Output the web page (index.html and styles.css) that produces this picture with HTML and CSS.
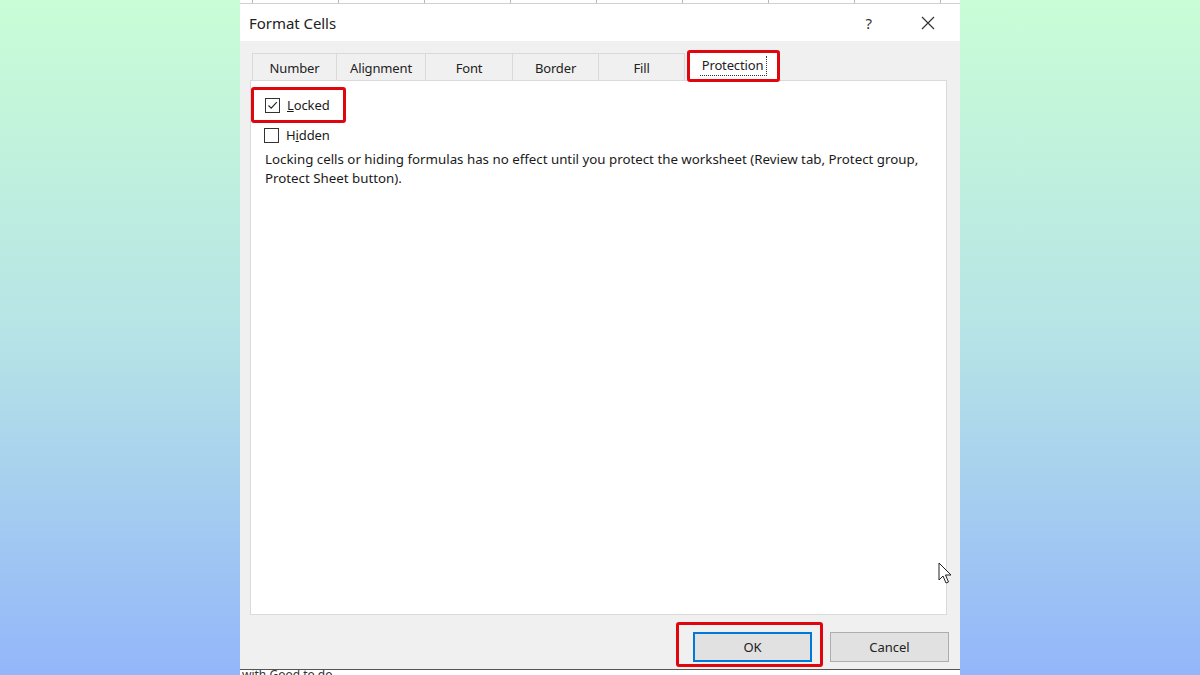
FILE: index.html
```html
<!DOCTYPE html>
<html>
<head>
<meta charset="utf-8">
<link rel="stylesheet" href="styles.css">
</head>
<body>
<div class="screen">
  <div class="sheet-top"></div>
  <div class="titlebar">
    <span class="title">Format Cells</span>
    <span class="help">?</span>
    <svg class="close" width="14" height="14" viewBox="0 0 14 14"><path d="M1 1 L13 13 M13 1 L1 13" stroke="#333" stroke-width="1.2" fill="none"/></svg>
  </div>
  <div class="dialog-body">
    <div class="tabs">
      <div class="tab t-number">Number</div>
      <div class="tab t-align">Alignment</div>
      <div class="tab t-font">Font</div>
      <div class="tab t-border">Border</div>
      <div class="tab t-fill">Fill</div>
      <div class="tab tab-active"><span class="focus">Protection</span></div>
    </div>
    <div class="panel">
      <div class="check-row locked-row">
        <span class="box"><svg width="13" height="13" viewBox="0 0 13 13"><path d="M2.5 6.5 L5.2 9.2 L10.8 3.2" stroke="#222" stroke-width="1.1" fill="none"/></svg></span>
        <span class="label"><u>L</u>ocked</span>
      </div>
      <div class="check-row">
        <span class="box"></span>
        <span class="label">H<u>i</u>dden</span>
      </div>
      <p class="desc">Locking cells or hiding formulas has no effect until you protect the worksheet (Review tab, Protect group, Protect Sheet button).</p>
    </div>
    <div class="buttons">
      <div class="ok-wrap"><button class="btn btn-ok">OK</button></div>
      <button class="btn btn-cancel">Cancel</button>
    </div>
  </div>
  <div class="sheet-bottom"><span>with Good to do</span></div>
  <svg class="cursor" width="14" height="24" viewBox="0 0 14 24"><path d="M1 1 L1 18 L5 14 L8 21 L10.5 20 L7.5 13 L13 13 Z" fill="#fff" stroke="#222" stroke-width="1" stroke-linejoin="round"/></svg>
</div>
</body>
</html>
```
FILE: styles.css
```css
html, body {
  margin: 0;
  padding: 0;
}
body {
  width: 1200px;
  height: 675px;
  overflow: hidden;
  background: linear-gradient(180deg, #c9fdd6 0%, #b6e3e6 50%, #93b6fa 100%);
  font-family: "Noto Sans", "Open Sans", sans-serif;
  color: #1a1a1a;
}
.screen {
  position: relative;
  width: 720px;
  height: 675px;
  margin-left: 240px;
  display: flex;
  flex-direction: column;
  background: #f0f0f0;
}
.sheet-top {
  height: 3px;
  background-color: #ffffff;
  background-image: repeating-linear-gradient(90deg, transparent 0, transparent 12px, #b8b8b8 12px, #b8b8b8 13px, transparent 13px, transparent 86px);
  border-bottom: 1px solid #d0d0d0;
}
.titlebar {
  height: 39px;
  background: #ffffff;
  display: flex;
  align-items: center;
  padding-left: 9px;
}
.title {
  font-size: 15px;
  color: #222;
  flex: 1;
  letter-spacing: -0.05px;
}
.help {
  font-size: 15px;
  color: #333;
  margin-right: 49px;
}
.close {
  margin-right: 25px;
}
.dialog-body {
  flex: 1;
  display: flex;
  flex-direction: column;
  padding-top: 11px;
}
.tabs {
  display: flex;
  align-items: flex-end;
  height: 28px;
  margin-left: 12px;
  font-size: 13px;
}
.tab {
  height: 27px;
  padding-top: 2px;
  border-top: 1px solid #d9d9d9;
  border-left: 1px solid #d9d9d9;
  display: flex;
  align-items: center;
  justify-content: center;
  color: #222;
  box-sizing: border-box;
  letter-spacing: -0.15px;
}
.t-number { width: 84px; }
.t-align { width: 89px; }
.t-font { width: 87px; }
.t-border { width: 86px; }
.t-fill { width: 87px; border-right: 1px solid #d9d9d9; }
.tab-active {
  position: relative;
  width: 93px;
  height: 32px;
  padding-top: 0;
  margin-left: 2px;
  margin-bottom: -2px;
  background: #ffffff;
  border: 3px solid #e0060e;
  border-radius: 3px;
  z-index: 2;
}
.focus {
  border: 1px dotted #333;
  border-top: none;
  border-left: none;
  padding: 0 3px 1px 2px;
}
.panel {
  height: 535px;
  width: 697px;
  margin-left: 10px;
  background: #ffffff;
  border: 1px solid #dadada;
  box-sizing: border-box;
  padding: 6px 0 0 0;
  font-size: 13px;
}
.check-row {
  display: flex;
  align-items: center;
  height: 27px;
  padding-left: 13px;
}
.locked-row {
  width: 95px;
  box-sizing: border-box;
  border: 3px solid #e0060e;
  border-radius: 3px;
  height: 36px;
  margin-top: 0;
  padding-left: 11px;
}
.box {
  width: 13px;
  height: 13px;
  border: 1px solid #333;
  margin-right: 7px;
  display: flex;
  background: #fff;
}
.label {
  color: #1a1a1a;
  letter-spacing: -0.1px;
}
.check-row + .check-row {
  height: 24px;
}
.desc {
  margin: 3px 0 0 14px;
  width: 680px;
  line-height: 19px;
  font-size: 13.3px;
  letter-spacing: 0;
}
.buttons {
  display: flex;
  justify-content: flex-end;
  align-items: flex-start;
  gap: 7px;
  margin-top: 7px;
  margin-right: 11px;
}
.ok-wrap {
  border: 3px solid #e0060e;
  border-radius: 3px;
  padding: 7px 8px 2px 14px;
}
.btn {
  width: 119px;
  height: 30px;
  background: #e1e1e1;
  border: 1px solid #adadad;
  font-family: "Noto Sans", "Open Sans", sans-serif;
  font-size: 13px;
  color: #222;
  padding: 0;
}
.btn-cancel {
  margin-top: 10px;
}
.btn-ok {
  border: 2px solid #0078d7;
}
.sheet-bottom {
  height: 5px;
  margin-top: 2px;
  border-top: 1px solid #555;
  background: #fff;
  overflow: hidden;
  font-size: 12px;
  line-height: 10px;
  padding-left: 2px;
  color: #333;
}
.cursor {
  position: absolute;
  left: 698px;
  top: 562px;
}
```
